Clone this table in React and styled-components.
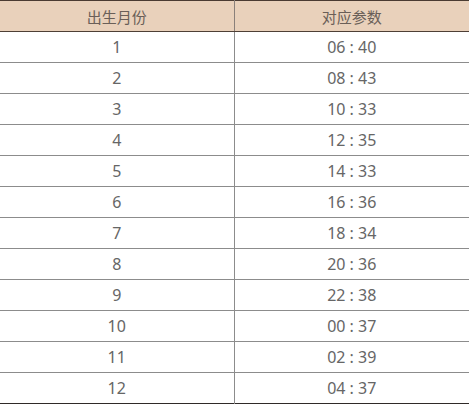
import React from "react";
import styled, { createGlobalStyle } from "styled-components";

const GlobalStyle = createGlobalStyle`
  body {
    margin: 0;
    background: #fff;
    font-family: "Noto Sans", "Noto Sans CJK SC", sans-serif;
  }
`;

const Table = styled.table`
  width: 469px;
  border-collapse: collapse;
  border-top: 1px solid #4a3b32;
  border-bottom: 1px solid #2f2a28;
  table-layout: fixed;
`;

const HeadCell = styled.th`
  height: 30px;
  padding: 0;
  background-color: #e9d1bb;
  color: #6a5f58;
  font-weight: 400;
  font-size: 15px;
  text-align: center;
  border-bottom: 1px solid #4e3f36;
  border-left: ${({ $first }) => ($first ? "none" : "1px solid #8a807a")};
`;

const Cell = styled.td`
  height: 30px;
  padding: 0;
  color: #666;
  font-size: 16px;
  text-align: center;
  border-top: 1px solid #8c8c8c;
  border-left: ${({ $first }) => ($first ? "none" : "1px solid #8c8c8c")};
`;

const rows = [
  ["1", "06 : 40"],
  ["2", "08 : 43"],
  ["3", "10 : 33"],
  ["4", "12 : 35"],
  ["5", "14 : 33"],
  ["6", "16 : 36"],
  ["7", "18 : 34"],
  ["8", "20 : 36"],
  ["9", "22 : 38"],
  ["10", "00 : 37"],
  ["11", "02 : 39"],
  ["12", "04 : 37"],
];

const App = () => {
  return (
    <>
      <GlobalStyle />
      <Table>
        <colgroup>
          <col style={{ width: 234 }} />
          <col />
        </colgroup>
        <thead>
          <tr>
            <HeadCell $first>出生月份</HeadCell>
            <HeadCell>对应参数</HeadCell>
          </tr>
        </thead>
        <tbody>
          {rows.map(([month, value]) => (
            <tr key={month}>
              <Cell $first>{month}</Cell>
              <Cell>{value}</Cell>
            </tr>
          ))}
        </tbody>
      </Table>
    </>
  );
};

export default App;
